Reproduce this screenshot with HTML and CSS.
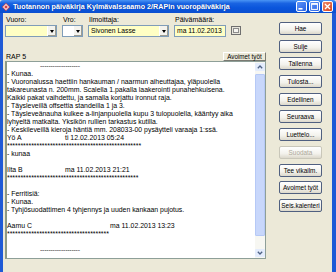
FILE: index.html
```html
<!DOCTYPE html>
<html lang="fi">
<head>
<meta charset="utf-8">
<title>Tuotannon päiväkirja</title>
<link rel="stylesheet" href="styles.css">
</head>
<body>
<div class="window">
  <div class="titlebar">
    <svg class="app-icon" width="8" height="8" viewBox="0 0 8 8"><path d="M4 0.3 L7.7 4 L4 7.7 L0.3 4 Z" fill="#f4e8e8" stroke="#c0303a" stroke-width="0.9"/><path d="M4 2.2 L5.8 4 L4 5.8 L2.2 4 Z" fill="#d83a40"/></svg>
    <span class="title">Tuotannon päiväkirja Kylmävalssaamo 2/RAPin vuoropäiväkirja</span>
    <div class="caption-buttons">
      <span class="cap-btn"><svg width="11" height="11" viewBox="0 0 11 11"><rect x="2.5" y="7" width="4" height="1.6" fill="#fff"/></svg></span>
      <span class="cap-btn"><svg width="11" height="11" viewBox="0 0 11 11"><rect x="2.6" y="2.6" width="5.8" height="5.8" fill="none" stroke="#fff" stroke-width="1"/><rect x="2.6" y="2.4" width="5.8" height="1.4" fill="#fff"/></svg></span>
      <span class="cap-btn close"><svg width="11" height="11" viewBox="0 0 11 11"><path d="M3 3 L8 8 M8 3 L3 8" stroke="#fff" stroke-width="1.4"/></svg></span>
    </div>
  </div>
  <div class="frame">
    <div class="main">
      <div class="fields">
        <div class="field w-vuoro">
          <span class="label">Vuoro:</span>
          <div class="combo yellow"><span class="val"></span><span class="drop"><i></i></span></div>
        </div>
        <div class="field w-vro">
          <span class="label">Vro:</span>
          <div class="combo"><span class="val"></span><span class="drop"><i></i></span></div>
        </div>
        <div class="field w-ilm">
          <span class="label">Ilmoittaja:</span>
          <div class="combo yellow"><span class="val">Sivonen Lasse</span><span class="drop"><i></i></span></div>
        </div>
        <div class="field w-date">
          <span class="label">Päivämäärä:</span>
          <div class="combo yellow"><span class="val">ma 11.02.2013</span></div>
        </div>
        <div class="field w-cal">
          <span class="label">&nbsp;</span>
          <span class="cal-btn"><i></i></span>
        </div>
      </div>
      <div class="rap-row">
        <span class="rap-label">RAP 5</span>
        <span class="small-btn">Avoimet työt</span>
      </div>
      <div class="textbox">
        <div class="text">
          <div class="line dash">-------------------</div>
          <div class="line">- Kunaa.</div>
          <div class="line">- Vuoronalussa haettiin hankauman / naarmun aiheuttajaa, yläpuolella</div>
          <div class="line">takareunasta n. 200mm. Scalella 1.pakalla laakerointi punahehkuisena.</div>
          <div class="line">Kaikki pakat vaihdettu, ja samalla korjattu ironnut raja.</div>
          <div class="line">- Täysleveillä offsettia standeilla 1 ja 3.</div>
          <div class="line">- Täysleveänauha kulkee a-linjanpuolella kupu 3 tulopuolella, kääntyy aika</div>
          <div class="line">lyhyeltä matkalta. Yksikön rullien tarkastus kutilla.</div>
          <div class="line">- Keskileveillä kieroja häntiä mm. 208033-00 pysäytteli varaaja 1:ssä.</div>
          <div class="line"><span class="who short">Yö A</span>ti 12.02.2013 05:24</div>
          <div class="line">**************************************************</div>
          <div class="line">- kunaa</div>
          <div class="line"></div>
          <div class="line"><span class="who short">Ilta B</span>ma 11.02.2013 21:21</div>
          <div class="line">*************************************************</div>
          <div class="line"></div>
          <div class="line">- Ferritisiä:</div>
          <div class="line">- Kunaa.</div>
          <div class="line">- Tyhjösuodattimen 4 tyhjennys ja uuden kankaan pujotus.</div>
          <div class="line"></div>
          <div class="line"><span class="who long">Aamu C</span>ma 11.02.2013 13:23</div>
          <div class="line">**************************************</div>
          <div class="line"></div>
          <div class="line dash">-------------------</div>
        </div>
        <div class="scrollbar">
          <span class="sb-arrow"><svg width="8" height="8" viewBox="0 0 8 8"><path d="M1.8 5.2 L4 3 L6.2 5.2" fill="none" stroke="#4d6185" stroke-width="1.3"/></svg></span>
          <span class="sb-thumb"></span>
          <span class="sb-arrow"><svg width="8" height="8" viewBox="0 0 8 8"><path d="M1.8 2.8 L4 5 L6.2 2.8" fill="none" stroke="#4d6185" stroke-width="1.3"/></svg></span>
        </div>
      </div>
    </div>
    <div class="side">
      <span class="btn">Hae</span>
      <span class="btn">Sulje</span>
      <span class="btn">Tallenna</span>
      <span class="btn">Tulosta...</span>
      <span class="btn">Edellinen</span>
      <span class="btn">Seuraava</span>
      <span class="btn">Luettelo...</span>
      <span class="btn disabled">Suodata</span>
      <span class="btn">Tee vikailm.</span>
      <span class="btn">Avoimet työt</span>
      <span class="btn">Seis.kalenteri</span>
    </div>
  </div>
</div>
</body>
</html>
```
FILE: styles.css
```css
* { box-sizing: border-box; }
html, body { margin: 0; padding: 0; }
body {
  width: 336px;
  height: 272px;
  overflow: hidden;
  font-family: "Liberation Sans", Arial, sans-serif;
  font-size: 7px;
  color: #000;
  background: #ece9d8;
}
.window {
  width: 336px;
  height: 272px;
  display: flex;
  flex-direction: column;
}
.titlebar {
  height: 13px;
  flex: none;
  display: flex;
  align-items: center;
  padding-left: 2px;
  background: linear-gradient(#4a95f5 0%, #1a64e2 25%, #0a55dc 60%, #0b4fd0 100%);
  border-radius: 3px 3px 0 0;
}
.app-icon { flex: none; }
.title {
  margin-left: 3px;
  color: #fff;
  font-weight: bold;
  font-size: 7.2px;
  white-space: nowrap;
  text-shadow: 1px 0 0 rgba(0,0,40,0.35);
  flex: 1;
}
.caption-buttons {
  display: flex;
  gap: 2px;
  margin-right: 3px;
}
.cap-btn {
  width: 11px;
  height: 11px;
  display: block;
  border: 1px solid #fff;
  border-radius: 2px;
  background: linear-gradient(135deg, #5d94f8, #2a63e4);
  position: relative;
}
.cap-btn svg { position: absolute; left: -1px; top: -1px; }
.cap-btn.close { background: linear-gradient(135deg, #ef8a6a, #d6421f); }
.frame {
  flex: 1;
  display: flex;
  border-left: 3px solid #1f5ad6;
  border-right: 4px solid #1f5ad6;
  background: #ece9d8;
  padding: 3px 10px 13px 2px;
  min-height: 0;
}
.main {
  width: 261px;
  display: flex;
  flex-direction: column;
}
.fields {
  display: flex;
  gap: 5px;
}
.field { display: flex; flex-direction: column; }
.w-vuoro { width: 52px; }
.w-vro { width: 21px; }
.w-ilm { width: 81px; }
.w-date { width: 52px; }
.w-cal { width: 10px; }
.label {
  height: 8px;
  line-height: 8px;
  padding-left: 1px;
  white-space: nowrap;
}
.combo {
  margin-top: 1px;
  height: 12px;
  display: flex;
  border: 1px solid #7f9db9;
  background: #fff;
}
.combo.yellow { background: #ffffc4; }
.val {
  flex: 1;
  padding-left: 2px;
  line-height: 10px;
  font-size: 6.8px;
  white-space: nowrap;
  overflow: hidden;
}
.drop {
  width: 9px;
  flex: none;
  margin: 0;
  background: #f4f3ee;
  border-left: 1px solid #fff;
  box-shadow: inset -1px -1px 0 #9d9d92;
  display: flex;
  align-items: center;
  justify-content: center;
}
.drop i {
  width: 0;
  height: 0;
  border-left: 2.5px solid transparent;
  border-right: 2.5px solid transparent;
  border-top: 3px solid #000;
  margin-top: 1px;
}
.cal-btn {
  margin-top: 2px;
  width: 10px;
  height: 9px;
  border: 1px solid #6f6f6f;
  background: #e8e6dc;
  display: flex;
  align-items: center;
  justify-content: center;
}
.cal-btn i {
  width: 6px;
  height: 5px;
  border: 1px solid #8c8c8c;
  background: #f6f5f0;
}
.rap-row {
  margin-top: 15px;
  height: 9px;
  display: flex;
  justify-content: space-between;
  align-items: center;
}
.rap-label { padding-left: 1px; line-height: 9px; }
.small-btn {
  width: 43px;
  height: 9px;
  line-height: 7px;
  font-size: 6.3px;
  text-align: center;
  border: 1px solid;
  border-color: #fff #7a7a72 #7a7a72 #fff;
  background: #ece9d8;
  white-space: nowrap;
}
.textbox {
  flex: 1;
  display: flex;
  border: 1px solid #8e9f98;
  border-left: 2px solid #8d9a86;
  background: #fff;
  min-height: 0;
}
.text {
  flex: 1;
  padding-top: 0;
  padding-left: 0;
  overflow: hidden;
}
.line {
  height: 8px;
  line-height: 8px;
  font-size: 6.9px;
  white-space: nowrap;
}
.line.dash { padding-left: 33px; color: #333; letter-spacing: -0.2px; }
.who { display: inline-block; }
.who.short { width: 58px; }
.who.long { width: 103px; }
.scrollbar {
  width: 10px;
  flex: none;
  display: flex;
  flex-direction: column;
  gap: 1px;
  padding: 1px 0;
  background: #f7f7f2;
}
.sb-arrow {
  height: 8px;
  display: flex;
  justify-content: center;
  align-items: center;
  background: #e4ecfc;
  border-radius: 1px;
}
.sb-thumb {
  flex: 1;
  margin: 2px 0 12px;
  background: #c8d7fb;
  border: 1px solid #b6c9f6;
  border-radius: 1px;
}
.side {
  margin-left: 13px;
  width: 43px;
  padding-top: 6px;
  display: flex;
  flex-direction: column;
  gap: 4.7px;
}
.btn {
  height: 13px;
  line-height: 11px;
  text-align: center;
  font-size: 6.4px;
  white-space: nowrap;
  border: 1px solid #506080;
  border-radius: 2px;
  background: linear-gradient(#ffffff 0%, #f3f2ec 60%, #dcd8cb 100%);
}
.btn.disabled { color: #aca899; border-color: #c9c7ba; }
```
